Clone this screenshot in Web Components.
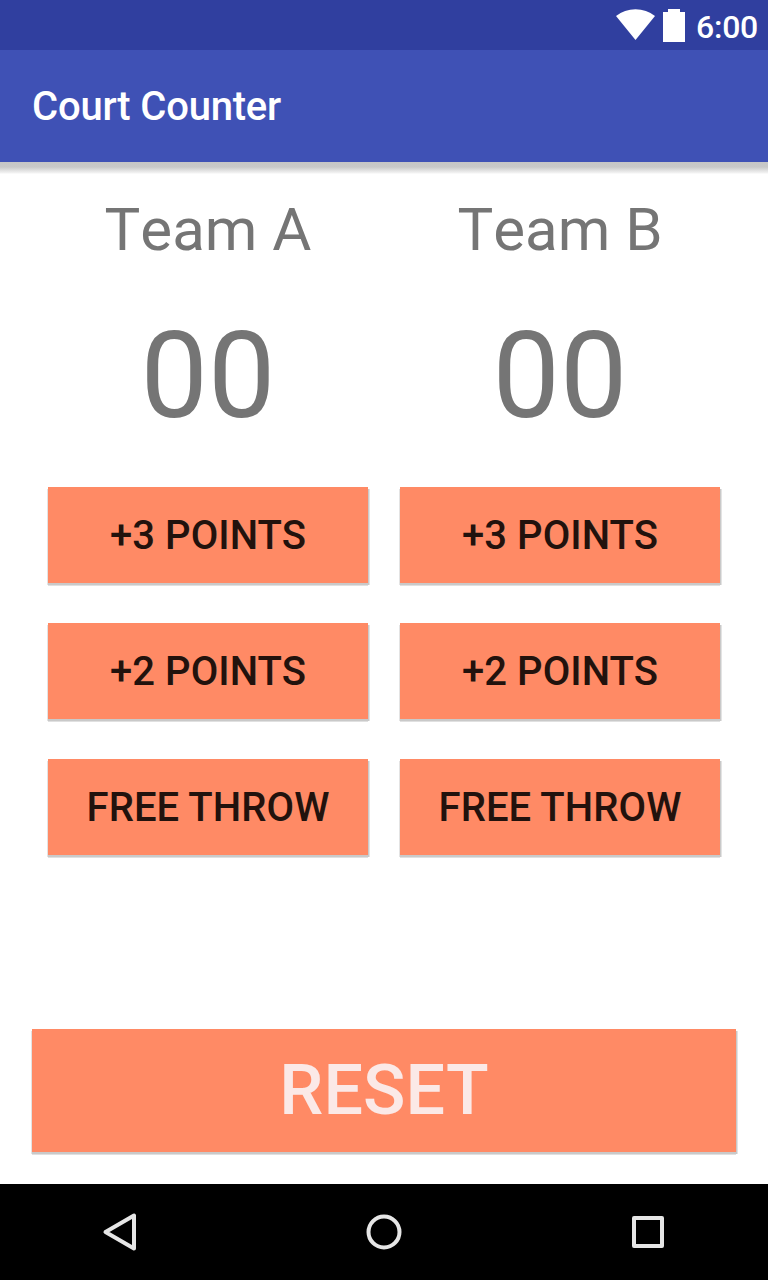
<!DOCTYPE html>
<html lang="en">
<head>
<meta charset="utf-8">
<title>Court Counter</title>
<style>
  html, body { margin: 0; height: 100%; }
  body { font-family: Roboto, sans-serif; background: #fff; overflow: hidden; }
</style>
</head>
<body>
<court-app></court-app>
<script>
class BaseElement extends HTMLElement {
  constructor() {
    super();
    this.attachShadow({ mode: "open" }).innerHTML = this.constructor.markup;
  }
}

class StatusBar extends BaseElement {
  static markup = `
    <style>
      :host { display: flex; justify-content: flex-end; height: 50px; background: #303f9f; color: #fff; flex: none; box-sizing: border-box; padding-right: 10px; }
      svg { display: block; flex: none; margin-right: 11px; }
      span { font-size: 32px; font-weight: 500; line-height: 54px; height: 50px; letter-spacing: -0.25px; }
    </style>
    <svg width="70" height="50" viewBox="615 0 70 50" fill="#fff">
      <path d="M635.5 40 616 16Q624.5 9.2 635.5 9.2T655 16Z"/>
      <path d="M668 9H680V12H685V42H663V12H668Z"/>
    </svg>
    <span><slot></slot></span>`;
}

class AppBar extends BaseElement {
  static markup = `
    <style>
      :host { display: block; height: 112px; background: #3f51b5; color: #fff; flex: none; box-sizing: border-box; padding-left: 32px; }
      h1 { margin: 0; font-size: 40px; font-weight: 500; line-height: 114px; height: 112px; letter-spacing: -0.2px; }
    </style>
    <h1><slot></slot></h1>`;
}

class RaisedButton extends BaseElement {
  static markup = `
    <style>
      :host { display: block; height: 96px; }
      button { display: block; width: 100%; height: 100%; margin: 0; padding: var(--label-drop, 2px) 0 0; border: 0; border-radius: 0; background: #ff8a65;
        font: 500 var(--label-size, 40px)/1.172 Roboto, sans-serif; letter-spacing: 0.08px; text-transform: uppercase; text-align: center; color: var(--label-color, #22120d);
        box-shadow: 0 2px 0 #c9c9c9, 1px 2px 0 #c9c9c9, 0 3px 0 #e0e0e0, -1px 2px 0 #e3e3e3, 2px 2px 0 #e3e3e3; }
    </style>
    <button><slot></slot></button>`;
}

class TeamPanel extends BaseElement {
  static markup = `
    <style>
      :host { display: block; width: 320px; color: #757575; text-align: center; }
      .name { font-size: 60px; line-height: 71px; white-space: nowrap; font-kerning: none; }
      .score { font-size: 120px; line-height: 141px; margin: 41px 0 40px; }
      .actions { display: grid; gap: 40px; }
    </style>
    <div class="name"><slot name="name"></slot></div>
    <div class="score"><slot name="score"></slot></div>
    <div class="actions">
      <raised-button>+3 Points</raised-button>
      <raised-button>+2 Points</raised-button>
      <raised-button>Free throw</raised-button>
    </div>`;
}

class NavBar extends BaseElement {
  static markup = `
    <style>
      :host { display: flex; justify-content: space-between; align-items: center; height: 96px; background: #000; flex: none; box-sizing: border-box; padding: 0 90px; }
      svg { display: block; fill: none; stroke: #e6e6e6; stroke-width: 4; stroke-linejoin: round; }
    </style>
    <svg width="60" height="60"><path d="M44 15.500V48.500L15.500 32Z" transform="translate(0 -2)"/></svg>
    <svg width="60" height="60"><circle cx="30" cy="30" r="15.500"/></svg>
    <svg width="60" height="60"><rect x="16" y="16" width="28" height="28"/></svg>`;
}

class CourtApp extends BaseElement {
  static markup = `
    <style>
      :host { display: flex; flex-direction: column; width: 768px; height: 1280px; background: #fff; }
      main { flex: 1; display: flex; flex-direction: column; justify-content: space-between; padding: 0 32px 32px;
        background: linear-gradient(#c6c6c6 0, #c9c9c9 5px, #f3f3f3 11px, #fff 12px) top / 100% 12px no-repeat; }
      .teams { display: flex; justify-content: center; gap: 32px; padding-top: 32px; }
      .reset { height: 123px; --label-size: 70px; --label-color: #fbe9e7; --label-drop: 0px; }
    </style>
    <status-bar>6:00</status-bar>
    <app-bar>Court Counter</app-bar>
    <main>
      <div class="teams">
        <team-panel><span slot="name">Team A</span><span slot="score">00</span></team-panel>
        <team-panel><span slot="name">Team B</span><span slot="score">00</span></team-panel>
      </div>
      <raised-button class="reset">Reset</raised-button>
    </main>
    <nav-bar></nav-bar>`;
}

customElements.define("status-bar", StatusBar);
customElements.define("app-bar", AppBar);
customElements.define("raised-button", RaisedButton);
customElements.define("team-panel", TeamPanel);
customElements.define("nav-bar", NavBar);
customElements.define("court-app", CourtApp);
</script>
</body>
</html>
